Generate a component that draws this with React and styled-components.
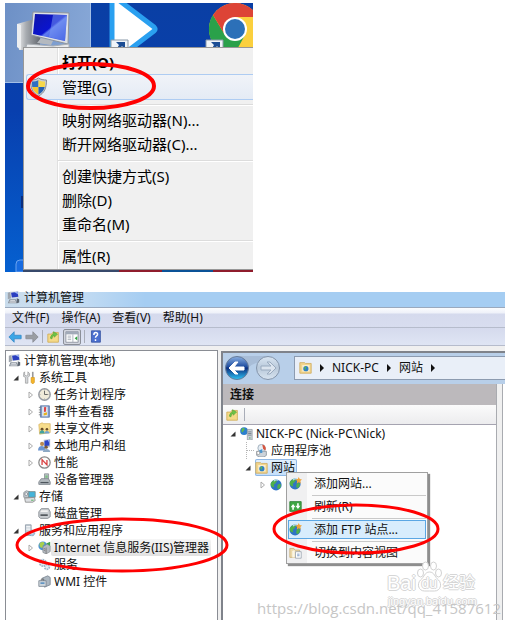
import React from 'react';
import styled, { createGlobalStyle, css } from 'styled-components';

const GlobalStyle = createGlobalStyle`
  * {
    box-sizing: border-box;
  }
  body {
    margin: 0;
    background: #fff;
    color: #111;
    font-family: 'Noto Sans', 'Noto Sans CJK SC', sans-serif;
  }
  button {
    font: inherit;
    color: inherit;
    background: none;
    border: none;
    padding: 0;
    margin: 0;
    text-align: left;
    white-space: nowrap;
  }
  ul {
    list-style: none;
    margin: 0;
    padding: 0;
  }
  svg {
    display: block;
    flex: none;
  }
`;

const Page = styled.main`
  display: flex;
  flex-direction: column;
  gap: 20px;
  padding: 3px 5px 7px;
`;

/* desktop with its context menu */

const Desktop = styled.section`
  position: relative;
  overflow: hidden;
  width: 100%;
  max-width: 248px;
  padding: 44px 0 2px 18px;
  background: linear-gradient(180deg, #0a3fa4 0%, #083fae 40%, #0560d0 100%);
`;

const Selection = styled.div`
  position: absolute;
  left: 0;
  top: 0;
  width: 86px;
  height: 80px;
  background: linear-gradient(100deg, #6d90c6, #89a9d8);
  border: solid #a3bfe6;
  border-width: 0 1px 1px 0;
`;

const DesktopArt = styled.svg`
  position: absolute;
  left: 0;
  top: 0;
`;

const DesktopMenu = styled.div`
  position: relative;
  display: flex;
  flex-direction: column;
  padding: 2px 0 1px;
  border: solid #979797;
  border-width: 1px 0 1px 1px;
  background: linear-gradient(
    90deg,
    #f1f1f1 33px,
    #e0e0e0 33px,
    #e0e0e0 34px,
    #fff 34px,
    #fff 35px,
    #f0f0f0 35px
  );
`;

const DesktopMenuItem = styled.button`
  display: flex;
  align-items: center;
  height: 24px;
  padding-left: 5px;
  font-size: 15px;
  line-height: 24px;
  color: #000;
  font-weight: ${({ $bold }) => ($bold ? 700 : 400)};
  ${({ $active }) =>
    $active &&
    css`
      height: 26px;
      margin-left: 2px;
      padding-left: 2px;
      border: 1px solid #aeccf2;
      border-right: none;
      border-radius: 3px 0 0 3px;
      background: linear-gradient(180deg, #f0f3f8, #e4ebf5);
    `}
`;

const DesktopMenuIcon = styled.span`
  width: 33px;
  flex: none;
`;

const DesktopMenuLine = styled.div`
  height: 8px;
  margin-left: 34px;
  background: linear-gradient(
    180deg,
    transparent 4px,
    #dcdcdc 4px,
    #dcdcdc 5px,
    #fff 5px,
    #fff 6px,
    transparent 6px
  );
`;

const DesktopRing = styled.svg`
  position: absolute;
  left: 20px;
  top: 57px;
  pointer-events: none;
`;

/* computer management window */

const Window = styled.section`
  position: relative;
  font-size: 12px;
  line-height: 17px;
  background: #f0f0f0;
`;

const TitleBar = styled.header`
  display: flex;
  align-items: center;
  gap: 4px;
  height: 16px;
  padding: 0 2px 4px;
  border-bottom: 1px solid #9aa9bd;
  background: linear-gradient(90deg, #c9dcec 0, #cadff2 60px, #a5cdf2 140px);
`;

const MenuBar = styled.nav`
  display: flex;
  gap: 12px;
  height: 20px;
  padding: 0 7px;
  align-items: center;
  border-bottom: 1px solid #b6bccc;
  background: linear-gradient(180deg, #fbfcfe 0, #eef1f9 5px, #d5daed 6px, #d8ddef 100%);
`;

const ToolBar = styled.div`
  display: flex;
  align-items: center;
  gap: 3px;
  height: 18px;
  padding: 0 3px;
  border-bottom: 1px solid #b6bccc;
  background: linear-gradient(180deg, #d5daed, #dfe5f4);
`;

const ToolButton = styled.button`
  display: flex;
  align-items: center;
  justify-content: center;
  width: ${({ $pressed }) => ($pressed ? 18 : 14)}px;
  height: 16px;
  border: ${({ $pressed }) => ($pressed ? '1px solid #8b8f98' : 'none')};
  border-radius: 2px;
  background: ${({ $pressed }) => ($pressed ? '#d3d6df' : 'none')};
`;

const ToolLine = styled.span`
  width: 1px;
  height: 13px;
  background: #a9adb8;
`;

const Body = styled.div`
  display: flex;
  gap: 3px;
  padding-top: 4px;
`;

const TreePane = styled.div`
  flex: none;
  width: 213px;
  padding: 1px 0 30px 2px;
  border: solid #8a8d94;
  border-width: 1px 1px 0 1px;
  background: #fff;
`;

const TreeRow = styled.li`
  display: flex;
  align-items: center;
  height: 17px;
  padding-left: ${({ $indent }) => $indent * 15}px;
  white-space: nowrap;
`;

const Toggle = styled.span`
  display: flex;
  align-items: center;
  justify-content: center;
  align-self: stretch;
  width: 15px;
  flex: none;
`;

const TreeLabel = styled.span`
  padding: 0 2px 0 3px;
  ${({ $selected }) =>
    $selected &&
    css`
      border-radius: 2px;
      background: linear-gradient(180deg, #f6f6f6, #e2e2e2);
    `}
`;

const TreeItem = styled.span`
  display: flex;
  align-items: center;
  height: 17px;
  ${({ $selected }) =>
    $selected &&
    css`
      border-radius: 2px;
      box-shadow: inset 0 0 0 1px #8fb8e6;
      background: linear-gradient(180deg, #e3f0fd, #c3defa);
    `}
`;

const IisPane = styled.div`
  flex: 1;
  min-width: 0;
  margin-top: 1px;
  display: flex;
  flex-direction: column;
  border: solid #7f838b;
  border-width: 2px 0 0 2px;
  background: #f0f0f0;
`;

const AddressRow = styled.div`
  display: flex;
  align-items: center;
  height: 31px;
  padding: 0 0 2px 1px;
  background: #b8cfe9;
`;

const AddressBox = styled.div`
  flex: 1;
  display: flex;
  align-items: center;
  gap: 8px;
  height: 24px;
  margin-left: 12px;
  padding-left: 4px;
  border: solid #8c9bb0;
  border-width: 1px 0 1px 1px;
  background: #e9eff8;
`;

const IisColumns = styled.div`
  flex: 1;
  display: flex;
  gap: 5px;
`;

const Connections = styled.div`
  flex: 1;
  min-width: 0;
  position: relative;
  border-right: 1px solid #a9abb0;
  background: #fff;
`;

const NextColumn = styled.div`
  width: 3px;
  border-left: 1px solid #a9abb0;
  background: #fff;
`;

const ConnectionsTitle = styled.h2`
  margin: 0;
  height: 21px;
  padding-left: 7px;
  font-size: 12px;
  line-height: 21px;
  font-weight: 700;
  background: #bcb9bc;
`;

const ConnectionsBar = styled.div`
  display: flex;
  align-items: center;
  gap: 5px;
  height: 20px;
  padding-left: 2px;
  border-bottom: 1px solid #a5a3b0;
  background: linear-gradient(180deg, #fbfbfb, #ececee);
`;

const IisTree = styled.ul`
  padding-left: 2px;
`;

const IisMenu = styled.div`
  position: absolute;
  left: 63px;
  top: 88px;
  width: 142px;
  padding: 1px;
  border: 1px solid #a0a0a0;
  background: linear-gradient(90deg, #f0f0f1 20px, #fbfbfb 20px);
  box-shadow: 2px 2px 1px #8e8e8e;
`;

const IisMenuItem = styled.button`
  display: flex;
  align-items: center;
  gap: 12px;
  width: 100%;
  height: 19px;
  padding-left: 1px;
  ${({ $active }) =>
    $active &&
    css`
      box-shadow: inset 0 0 0 1px #5ba7e4;
      background: #d8edfd;
    `}
`;

const IisMenuLine = styled.div`
  height: 4px;
  margin-left: 24px;
  background: linear-gradient(180deg, transparent 2px, #c9c9c9 2px, #c9c9c9 3px, transparent 3px);
`;

const WindowOverlay = styled.svg`
  position: absolute;
  left: 0;
  top: 0;
  pointer-events: none;
`;

const Baidu = styled.div`
  position: absolute;
  right: 28px;
  bottom: 12px;
  width: 90px;
  white-space: nowrap;
  color: #fff;
  text-shadow: 1px 0 0 #d6d6d6, -1px 0 0 #d6d6d6, 0 1px 0 #d6d6d6, 0 -1px 0 #d6d6d6;
  pointer-events: none;
`;

const BaiduBrand = styled.div`
  display: flex;
  align-items: center;
  height: 24px;
  font: 400 20px/24px 'Liberation Sans', 'Noto Sans CJK SC', sans-serif;
`;

const BaiduPaw = styled.svg`
  margin-top: -12px;
`;

const BaiduWord = styled.span`
  font-size: 16px;
`;

const BaiduSite = styled.div`
  padding-left: 1px;
  font: 400 11px/13px 'Liberation Sans', sans-serif;
`;

const BlogMark = styled.div`
  position: absolute;
  right: 4px;
  bottom: 2px;
  font: 15px/20px 'Open Sans', sans-serif;
  color: #c6c6c6;
  pointer-events: none;
`;

/* icons */

const Icon = ({ children, size = 13 }) => (
  <svg width={size} height={size} viewBox="0 0 16 16" aria-hidden="true">
    {children}
  </svg>
);

const ComputerIcon = () => (
  <Icon>
    <path d="M1 2l4-1v8l-4 1z" fill="#9ea5ad" />
    <path d="M4 1l10-1 1 8-10 1z" fill="#d5dbe4" />
    <path d="M5 2l8-1 1 6-8 1z" fill="#2b3fc0" />
    <path d="M9 1.500l4-.5.6 3z" fill="#9cb6f5" />
    <path d="M3 10h8l2 5H1z" fill="#8b939d" />
    <path d="M4 11h6v1H4zM3 13h8v1H3z" fill="#e9ecf0" />
    <path d="M12 9l3 1v4l-3 1z" fill="#5c6570" />
  </Icon>
);

const ToolsIcon = () => (
  <Icon>
    <path d="M2 1v4l2 1 2-1V1l2 2v3L6 8v7H3V8L0 6V3z" fill="#d4d7da" stroke="#888" strokeWidth=".7" />
    <path d="M11 1h2v7h-2z" fill="#999" />
    <path d="M10 8h4v6l-2 2-2-2z" fill="#f5b52a" stroke="#c98a10" strokeWidth=".7" />
  </Icon>
);

const ClockIcon = () => (
  <Icon>
    <circle cx="8" cy="8" r="7" fill="#f0ead9" stroke="#989ca3" strokeWidth="1.800" />
    <path d="M8 3.500V8h4" fill="none" stroke="#666" strokeWidth="1.200" />
    <path d="M8 2v1M8 13v1M2 8h1M13 8h1" stroke="#999" />
  </Icon>
);

const EventIcon = () => (
  <Icon>
    <path d="M3 1h11v14H3z" fill="#7f9cc9" stroke="#5b76a6" />
    <path d="M5 2h7v12H5z" fill="#dbe3ef" />
    <path d="M1 3h3M1 6h3M1 9h3M1 12h3" stroke="#777" />
    <path d="M8 3l1.500 0L9 8H8z" fill="#d33" stroke="#d33" />
    <path d="M7 10l4-1v3l-4 1z" fill="#e7b31c" />
  </Icon>
);

const SharedIcon = () => (
  <Icon>
    <path d="M1 3l4-2 2 1h8v11l-13 2z" fill="#f7dd8c" stroke="#d3ac52" strokeWidth=".8" />
    <circle cx="5" cy="9" r="1.800" fill="#6a4f2b" />
    <path d="M2 14c0-5 6-5 6 0z" fill="#41a3a0" />
    <circle cx="11" cy="9" r="1.600" fill="#6a4f2b" />
    <path d="M8 14c0-4 6-4 6 0z" fill="#6fa3d0" />
  </Icon>
);

const UsersIcon = () => (
  <Icon>
    <path d="M7 1l8-1v10l-8 1z" fill="#c3cad5" />
    <path d="M8 2l6-1v7l-6 1z" fill="#2b43c6" />
    <path d="M12 1.500l2-.5v4z" fill="#9cb6f5" />
    <circle cx="5" cy="6" r="2.500" fill="#b98a50" />
    <path d="M0 14c0-7 9-7 9 0z" fill="#6d96cf" />
    <circle cx="10" cy="10" r="2.100" fill="#7a5a35" />
    <path d="M6 16c0-5 9-5 9 0z" fill="#8ca8c4" />
  </Icon>
);

const PerformanceIcon = () => (
  <Icon>
    <circle cx="8" cy="8" r="7" fill="#fbfbfb" stroke="#888" strokeWidth="1.500" />
    <path d="M5 11V4.500l6 6.500V5" fill="none" stroke="#d94040" strokeWidth="1.600" />
  </Icon>
);

const DeviceIcon = () => (
  <Icon>
    <path d="M8 1h5v7H8z" fill="#bcc4c9" stroke="#8a9096" />
    <path d="M9 3h3v3H9z" fill="#7fbf86" />
    <path d="M4 7h9l2 4v3H1v-3z" fill="#b2b9be" stroke="#7d848a" />
    <path d="M3 11h10v1.500H3z" fill="#4e565d" />
  </Icon>
);

const StorageIcon = () => (
  <Icon>
    <path d="M1 3l3-2 4 1v7H1z" fill="#c9cfd4" stroke="#858b91" />
    <path d="M7 2h8v7H7z" fill="#45b4da" stroke="#788" />
    <path d="M2 10l12-1 1 4-3 2H3z" fill="#dcdfe2" stroke="#888" />
    <circle cx="4" cy="5" r="1.800" fill="#f4f4f4" stroke="#6d7780" strokeWidth=".8" />
    <path d="M10 12h3v1h-3z" fill="#3aa845" />
  </Icon>
);

const DiskIcon = () => (
  <Icon>
    <path d="M1 6l3-4h9l2 4v6l-3 2H3l-2-2z" fill="#c8ccd0" stroke="#80868c" />
    <path d="M4 4h8v2H3z" fill="#f2f2f2" />
    <path d="M3 9h9v2H3z" fill="#4c5258" />
  </Icon>
);

const ServicesAppsIcon = () => (
  <Icon>
    <path d="M3 1h7v13H3z" fill="#c3cdd6" stroke="#8c99a5" />
    <path d="M4 3h5M4 5h5M4 7h5" stroke="#fff" />
    <circle cx="11" cy="11" r="3.500" fill="#aecae2" stroke="#7a9cbb" strokeDasharray="2 1" />
    <circle cx="11" cy="11" r="1" fill="#fff" />
  </Icon>
);

const IisIcon = () => (
  <Icon>
    <circle cx="6" cy="6" r="5.500" fill="#4b93d4" />
    <path d="M2 3c3-3 6-2 6 0s-3 2-2 4-3 2-4-1z" fill="#a9d04c" />
    <path d="M6 7l5-3 4 2v7l-5 3-4-2z" fill="#b5bac0" stroke="#80868d" strokeWidth=".8" />
    <path d="M10 8v8M7 9l2 1M7 11l2 1" stroke="#666" strokeWidth=".8" />
    <path d="M10 3l5-2v5z" fill="#3fa04a" />
  </Icon>
);

const GearsIcon = () => (
  <Icon>
    <circle cx="6" cy="6" r="4" fill="#e2ebf3" stroke="#9db5ca" strokeWidth="2" strokeDasharray="2 1" />
    <circle cx="11" cy="11" r="3" fill="#e2ebf3" stroke="#9db5ca" strokeWidth="2" strokeDasharray="2 1" />
    <circle cx="6" cy="6" r="1.300" fill="#8faac2" />
  </Icon>
);

const WmiIcon = () => (
  <Icon>
    <path d="M5 4l7-3 3 2v9l-7 3z" fill="#acb7c1" stroke="#7a8591" />
    <path d="M1 7h9v7H1z" fill="#d0d7dd" stroke="#7a8591" />
    <path d="M3 9h5v2H3z" fill="#5b90c2" />
    <path d="M4 7V5h3v2" fill="none" stroke="#666" />
  </Icon>
);

const BlueArrow = ({ flip, fill, stroke }) => (
  <Icon size={14}>
    <path
      d="M1 8l6-6v4h8v4H7v4z"
      fill={fill}
      stroke={stroke}
      strokeLinejoin="round"
      transform={flip ? 'matrix(-1 0 0 1 16 0)' : undefined}
    />
  </Icon>
);

const FolderUpIcon = () => (
  <Icon>
    <path d="M1 5h5l1-2h7v12H1z" fill="#f5da88" stroke="#cfab55" />
    <path d="M4 10c1-4 3-5 4-5V2l5 3-4 4V7C7 7 7 8 6 11z" fill="#6cc447" stroke="#4c9a2e" strokeWidth=".6" />
  </Icon>
);

const PanelIcon = () => (
  <Icon size={14}>
    <path d="M1 2h14v12H1z" fill="#fff" stroke="#8a909b" />
    <path d="M1 2h14v3H1z" fill="#a1aab8" />
    <path d="M9 5v9M3 7h4M3 9h4M3 11h4" stroke="#a6adb7" />
    <path d="M14 7v5l-3-2.500z" fill="#34a445" />
  </Icon>
);

const HelpIcon = () => (
  <Icon>
    <path d="M3 1h11v14H3z" fill="#4a6fcf" stroke="#3552a0" />
    <path d="M6 6c0-4 5-3.500 4.500-.5C10 7.500 8 7.500 8 9.500M8 11.500v2" fill="none" stroke="#fff" strokeWidth="1.800" />
  </Icon>
);

const SiteFolderIcon = () => (
  <Icon>
    <path d="M1 2h6l1 1h7v12H1z" fill="#f2d58c" stroke="#cfad60" />
    <path d="M4 5h9v8H4z" fill="#f9eed0" />
    <circle cx="8.500" cy="9.500" r="3.200" fill="#2f80c4" />
    <path d="M6.500 8c2-2 3-1 2 1s0 2-1 2z" fill="#5cb848" />
  </Icon>
);

const ServerIcon = () => (
  <Icon>
    <circle cx="5" cy="5" r="4.800" fill="#2b7fce" />
    <path d="M2 2c3-2 5 0 3 2s-1 3-3 2z" fill="#62bb4c" />
    <path d="M9 3h6v13H9z" fill="#c9d0d6" stroke="#8a939a" strokeWidth=".8" />
    <path d="M10 6h4M10 8h4M10 10h4" stroke="#6f7984" />
    <path d="M11 13h2v1h-2z" fill="#39a546" />
  </Icon>
);

const PoolIcon = () => (
  <Icon>
    <path d="M2 9h12v5l-3 2H5l-3-2z" fill="#ccd3da" stroke="#87919b" />
    <circle cx="8" cy="5" r="4.500" fill="#e6edf3" stroke="#93a4b4" />
    <path d="M9 1c3 0 5 3 4 7L10 6z" fill="#d5543f" />
    <path d="M5 8l4-2v5H5z" fill="#4d96cf" />
    <circle cx="4" cy="11" r="2" fill="#fff" stroke="#999" />
  </Icon>
);

const GlobeIcon = ({ star }) => (
  <Icon>
    <circle cx="7.500" cy="8.500" r="6.800" fill="#2f74c4" />
    <path d="M3 4c3-3 7-2 5 1S4 8 5 10s-3 2-4-1 1-4 2-5zM10 8c3-2 4 0 3 3s-4 3-4 1 0-3 1-4z" fill="#4fb04a" />
    <path d="M5 4c1-2 4-2 5-1" fill="none" stroke="#b9dcf6" strokeWidth="1.500" />
    {star && <path d="M12 0l1.200 2.500L16 3l-2 2 .5 3L12 6.500 9.500 8l.5-3-2-2 2.800-.5z" fill="#f2a53a" />}
  </Icon>
);

const RefreshIcon = () => (
  <Icon>
    <path d="M1 2h14v12H1z" fill="#3fa744" stroke="#2a7d30" />
    <path d="M2 9l3-4 3 4H6v3H4V9zM8 7l3 4 3-4h-2V4h-2v3z" fill="#fff" />
  </Icon>
);

const ContentViewIcon = () => (
  <Icon>
    <path d="M1 3h5l1 2h6v9H1z" fill="#ecd9a9" stroke="#c9b07a" />
    <path d="M4 6l3-1v9H4z" fill="#fbf6e6" />
    <path d="M8 7h7v8H8z" fill="#fff" stroke="#99a2ae" />
    <path d="M10 10h3M10 12h3" stroke="#6289bd" />
  </Icon>
);

const ShieldIcon = () => (
  <svg width="19" height="20" viewBox="0 0 19 20" aria-hidden="true">
    <path d="M9.500 1c2 1.500 5 2 8 2 0 8-2 13-8 16C3.500 16 1.500 11 1.500 3c3 0 6-.5 8-2z" fill="#c9ced4" stroke="#848b94" />
    <path d="M9.500 3v7H3.300C3 8.500 3 6.500 3 4.500c2.500 0 5-.5 6.500-1.500z" fill="#2e6fc2" />
    <path d="M9.500 3v7h6.200c.3-1.500.3-3.500.3-5.500-2.500 0-5-.5-6.500-1.500z" fill="#f7d84a" />
    <path d="M9.500 10v7.500C6 16 4 13 3.300 10z" fill="#f4c62e" />
    <path d="M9.500 10v7.500c3.500-1.500 5.500-4.500 6.200-7.500z" fill="#2560b0" />
  </svg>
);

const OpenMark = () => (
  <svg width="6" height="6" viewBox="0 0 6 6" aria-hidden="true">
    <path d="M5.500.5v5h-5z" fill="#333" />
  </svg>
);

const ClosedMark = () => (
  <svg width="6" height="8" viewBox="0 0 6 8" aria-hidden="true">
    <path d="M1 1l3.500 3L1 7z" fill="#fff" stroke="#aaa" />
  </svg>
);

const CrumbMark = () => (
  <svg width="4" height="8" viewBox="0 0 4 8" aria-hidden="true">
    <path d="M0 0l4 4-4 4z" fill="#111" />
  </svg>
);

const RoundButtons = () => (
  <svg width="58" height="28" viewBox="0 0 58 28" aria-hidden="true">
    <defs>
      <linearGradient id="backFill" x1="0" y1="0" x2="0" y2="1">
        <stop offset="0" stopColor="#8bb0e2" />
        <stop offset=".45" stopColor="#1d4c9f" />
        <stop offset=".5" stopColor="#0c2c7c" />
        <stop offset="1" stopColor="#2cc4f5" />
      </linearGradient>
      <linearGradient id="nextFill" x1="0" y1="0" x2="0" y2="1">
        <stop offset="0" stopColor="#d9e5f2" />
        <stop offset=".5" stopColor="#b9c9da" />
        <stop offset="1" stopColor="#d8e4f0" />
      </linearGradient>
    </defs>
    <path d="M13 2h31v5q-15 1-20 7H13z" fill="#a8bdd7" />
    <circle cx="13" cy="14" r="11.500" fill="url(#backFill)" stroke="#667b99" />
    <circle cx="44" cy="14" r="11.500" fill="url(#nextFill)" stroke="#8394aa" />
    <path d="M5 14l6-6h3l-4 5h10v3H10l4 4h-3z" fill="#fff" stroke="#fff" />
    <path d="M52 14l-6-6h-3l4 4H37v4h10l-4 4h3z" fill="#dbe4ee" stroke="#9aabbf" />
  </svg>
);

const DESKTOP_MENU = [
  { label: '打开(O)', bold: true },
  { label: '管理(G)', active: true, icon: <ShieldIcon /> },
  null,
  { label: '映射网络驱动器(N)...' },
  { label: '断开网络驱动器(C)...' },
  null,
  { label: '创建快捷方式(S)' },
  { label: '删除(D)' },
  { label: '重命名(M)' },
  null,
  { label: '属性(R)' },
];

const TREE = [
  { level: 0, label: '计算机管理(本地)', icon: <ComputerIcon /> },
  { level: 1, label: '系统工具', icon: <ToolsIcon />, open: true },
  { level: 2, label: '任务计划程序', icon: <ClockIcon />, open: false },
  { level: 2, label: '事件查看器', icon: <EventIcon />, open: false },
  { level: 2, label: '共享文件夹', icon: <SharedIcon />, open: false },
  { level: 2, label: '本地用户和组', icon: <UsersIcon />, open: false },
  { level: 2, label: '性能', icon: <PerformanceIcon />, open: false },
  { level: 2, label: '设备管理器', icon: <DeviceIcon /> },
  { level: 1, label: '存储', icon: <StorageIcon />, open: true },
  { level: 2, label: '磁盘管理', icon: <DiskIcon /> },
  { level: 1, label: '服务和应用程序', icon: <ServicesAppsIcon />, open: true },
  { level: 2, label: 'Internet 信息服务(IIS)管理器', icon: <IisIcon />, open: false, selected: true },
  { level: 2, label: '服务', icon: <GearsIcon /> },
  { level: 2, label: 'WMI 控件', icon: <WmiIcon /> },
];

const IIS_TREE = [
  { level: 0, label: 'NICK-PC (Nick-PC\\Nick)', icon: <ServerIcon />, open: true },
  { level: 1, label: '应用程序池', icon: <PoolIcon /> },
  { level: 1, label: '网站', icon: <SiteFolderIcon />, open: true, selected: true },
  { level: 2, label: '', icon: <GlobeIcon />, open: false },
];

const IIS_MENU = [
  { label: '添加网站...', icon: <GlobeIcon star /> },
  { label: '刷新(R)', icon: <RefreshIcon /> },
  { label: '添加 FTP 站点...', icon: <GlobeIcon star />, active: true },
  { label: '切换到内容视图', icon: <ContentViewIcon /> },
];

const Marker = ({ open }) => (
  <Toggle>
    {open === true && <OpenMark />}
    {open === false && <ClosedMark />}
  </Toggle>
);

// dotted elbow for a node that cannot be expanded
const Branch = () => (
  <Toggle>
    <svg width="15" height="17" viewBox="0 0 15 17" aria-hidden="true">
      <path d="M6.500 0v17M7 8.500h8" fill="none" stroke="#b5b5b5" strokeDasharray="1 1" />
    </svg>
  </Toggle>
);

const DesktopPanel = () => (
  <Desktop>
    <Selection />
    <DesktopArt width="248" height="269" viewBox="0 0 248 269" aria-hidden="true">
      <defs>
        <linearGradient id="screen" x1="0" y1="0" x2="1" y2="1">
          <stop offset="0" stopColor="#1016a8" />
          <stop offset=".5" stopColor="#0a14cf" />
          <stop offset=".55" stopColor="#5f7cf0" />
          <stop offset="1" stopColor="#1530d8" />
        </linearGradient>
        <linearGradient id="tower" x1="0" y1="0" x2="1" y2="0">
          <stop offset="0" stopColor="#f2f2f2" />
          <stop offset=".4" stopColor="#a7abb0" />
          <stop offset="1" stopColor="#63686f" />
        </linearGradient>
      </defs>
      <path d="M12 21l14-4 9 2v28H14z" fill="url(#tower)" />
      <path d="M12 21l4 1v25l-4-3z" fill="#eceef0" />
      <path d="M28 9l36 1-1 31-37-9z" fill="#dde1e6" stroke="#8e949b" />
      <path d="M30 11l32 1-2 26-32-7z" fill="url(#screen)" />
      <path d="M48 12l14 0-2 26-16-4z" fill="#7e9df2" opacity=".5" />
      <path d="M36 35l12 3-2 4-14-2z" fill="#b4b9bf" />
      <path d="M22 41l26 2 16-2v6H20z" fill="#e8eaec" stroke="#a9aeb4" />
      <path d="M107 -8L149 24q2 2 0 4L107 60z" fill="#fff" stroke="#2aa0f0" strokeWidth="5" strokeLinejoin="round" />
      <circle cx="230" cy="26" r="26" fill="#fbd03e" />
      <path d="M208 12L220 32H240L229 52A26 26 0 0 1 208 12z" fill="#2aa14a" />
      <path d="M208 12A26 26 0 0 1 253 14H230L220 32z" fill="#dd4436" />
      <circle cx="230" cy="26" r="12" fill="#fff" />
      <circle cx="230" cy="26" r="10" fill="#2c70b8" />
      <path d="M106 37h17v10h-17zM201 37h17v10h-17z" fill="#f0f4f8" stroke="#8998a8" />
      <path d="M111 39h9v8l-3-4-3 4h-3l3-5zM206 39h9v8l-3-4-3 4h-3l3-5z" fill="#1c4d94" />
      <path d="M11 269v-8q0-4 4-4h5v12z" fill="#176be0" stroke="#6ba3f0" />
      <path d="M16 193h3v12h-3z" fill="#0a2f80" />
      <path d="M18 267h96v2H18z" fill="#37496b" />
      <path d="M114 267h43v2h-43zM208 267h40v2h-40z" fill="#8f1c2c" />
      <path d="M157 267h51v2h-51z" fill="#0a5297" />
    </DesktopArt>
    <DesktopMenu role="menu">
      {DESKTOP_MENU.map((item, i) =>
        item ? (
          <DesktopMenuItem key={item.label} role="menuitem" $bold={item.bold} $active={item.active}>
            <DesktopMenuIcon>{item.icon}</DesktopMenuIcon>
            {item.label}
          </DesktopMenuItem>
        ) : (
          <DesktopMenuLine key={i} />
        )
      )}
    </DesktopMenu>
    <DesktopRing width="134" height="52" aria-hidden="true">
      <ellipse cx="66" cy="26" rx="63" ry="22" fill="none" stroke="#f00" strokeWidth="4" />
    </DesktopRing>
  </Desktop>
);

const ManagementTree = () => (
  <TreePane>
    <ul>
      {TREE.map(({ level, label, icon, open, selected }) => (
        <TreeRow key={label} $indent={Math.max(level - 1, 0)}>
          {level > 0 && <Marker open={open} />}
          {icon}
          <TreeLabel $selected={selected}>{label}</TreeLabel>
        </TreeRow>
      ))}
    </ul>
  </TreePane>
);

const IisManager = () => (
  <IisPane>
    <AddressRow>
      <RoundButtons />
      <AddressBox>
        <SiteFolderIcon />
        <CrumbMark />
        <button>NICK-PC</button>
        <CrumbMark />
        <button>网站</button>
        <CrumbMark />
      </AddressBox>
    </AddressRow>
    <IisColumns>
      <Connections>
        <ConnectionsTitle>连接</ConnectionsTitle>
        <ConnectionsBar>
          <ToolButton aria-label="上移">
            <FolderUpIcon />
          </ToolButton>
          <ToolLine />
        </ConnectionsBar>
        <IisTree>
          {IIS_TREE.map(({ level, label, icon, open, selected }) => (
            <TreeRow key={level + label} $indent={level}>
              {open === undefined ? <Branch /> : <Marker open={open} />}
              <TreeItem $selected={selected}>
                {icon}
                <TreeLabel>{label}</TreeLabel>
              </TreeItem>
            </TreeRow>
          ))}
        </IisTree>
        <IisMenu role="menu">
          {IIS_MENU.map(({ label, icon, active }, i) => (
            <React.Fragment key={label}>
              {i > 0 && <IisMenuLine />}
              <IisMenuItem role="menuitem" $active={active}>
                {icon}
                {label}
              </IisMenuItem>
            </React.Fragment>
          ))}
        </IisMenu>
      </Connections>
      <NextColumn />
    </IisColumns>
  </IisPane>
);

const ManagementWindow = () => (
  <Window>
    <TitleBar>
      <ComputerIcon />
      计算机管理
    </TitleBar>
    <MenuBar>
      <button>文件(F)</button>
      <button>操作(A)</button>
      <button>查看(V)</button>
      <button>帮助(H)</button>
    </MenuBar>
    <ToolBar>
      <ToolButton aria-label="后退">
        <BlueArrow fill="#3aa6e6" stroke="#3a8cc8" />
      </ToolButton>
      <ToolButton aria-label="前进">
        <BlueArrow flip fill="#9a9da3" stroke="#8b8e95" />
      </ToolButton>
      <ToolLine />
      <ToolButton aria-label="上移">
        <FolderUpIcon />
      </ToolButton>
      <ToolButton aria-label="显示树" $pressed>
        <PanelIcon />
      </ToolButton>
      <ToolLine />
      <ToolButton aria-label="帮助">
        <HelpIcon />
      </ToolButton>
    </ToolBar>
    <Body>
      <ManagementTree />
      <IisManager />
    </Body>
    <Baidu>
      <BaiduBrand>
        Bai
        <BaiduPaw width="27" height="34" viewBox="0 0 26 34" aria-hidden="true">
          <g fill="#fff" stroke="#d2d2d2">
            <ellipse cx="4" cy="13" rx="3" ry="4" />
            <ellipse cx="9" cy="6" rx="3" ry="4" />
            <ellipse cx="17" cy="6" rx="3" ry="4" />
            <ellipse cx="22" cy="13" rx="3" ry="4" />
            <path d="M13 12c5 0 5 5 9 8 4 4 2 11-4 11-3 0-7 0-10 0-6 0-8-7-4-11 4-3 4-8 9-8z" />
          </g>
          <text x="5" y="28" fontSize="14" fill="#fff">
            du
          </text>
        </BaiduPaw>
        <BaiduWord>经验</BaiduWord>
      </BaiduBrand>
      <BaiduSite>jingyan.baidu.com</BaiduSite>
    </Baidu>
    <BlogMark>https://blog.csdn.net/qq_41587612</BlogMark>
    <WindowOverlay width="500" height="328" aria-hidden="true">
      <g fill="none" stroke="#f00" strokeWidth="3">
        <ellipse cx="117" cy="253" rx="105" ry="26" />
        <ellipse cx="351" cy="237" rx="82" ry="24" />
      </g>
    </WindowOverlay>
  </Window>
);

const App = () => (
  <>
    <GlobalStyle />
    <Page>
      <DesktopPanel />
      <ManagementWindow />
    </Page>
  </>
);

export default App;
